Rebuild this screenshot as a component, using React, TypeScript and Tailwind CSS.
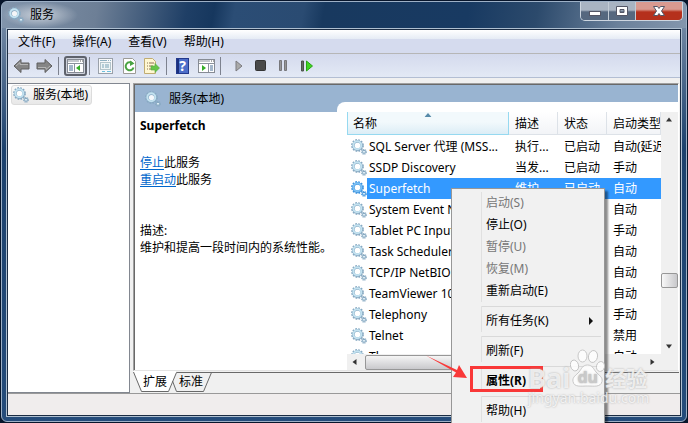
import React from "react";

function Gear({ active = false, size = 16 }: { active?: boolean; size?: number }) {
  const edge = active ? "#3d93de" : "#87a9c2";
  const ring = active ? "#7cc0f4" : "#c3e2f0";
  return (
    <svg width={size} height={size} viewBox="0 0 16 16" className="shrink-0" aria-hidden="true">
      <circle cx="6.5" cy="6.5" r="5.6" fill="none" stroke={edge} strokeWidth="1.600" strokeDasharray="1.76 1.17" />
      <circle cx="6.5" cy="6.5" r="4.1" fill="none" stroke={edge} strokeWidth="2.6" />
      <circle cx="6.3" cy="6.3" r="4" fill="none" stroke={ring} strokeWidth="1.9" />
      <circle cx="6.5" cy="6.5" r="2.6" fill="#fff" fillOpacity="0.9" />
      <circle cx="13" cy="12.8" r="2.3" fill="none" stroke={edge} strokeWidth="1.2" strokeDasharray="1.1 0.7" />
      <circle cx="13" cy="12.8" r="1.5" fill="#e4f3fa" stroke={edge} strokeWidth="1" />
    </svg>
  );
}

function CaptionButtons() {
  return (
    <div className="flex h-[19px] overflow-hidden rounded-b-[5px] border border-t-0 border-[#cdd6e0]">
      <button aria-label="最小化" className="flex w-7 items-center justify-center border-r border-[#c3ccd6] bg-linear-to-b from-[#a9b4c2] from-45% to-[#56687f] to-55%">
        <svg width="12" height="16" viewBox="0 0 12 16">
          <rect x="0.5" y="8.5" width="11" height="4" fill="#fff" stroke="#535666" />
        </svg>
      </button>
      <button aria-label="最大化" className="flex w-[27px] items-center justify-center border-r border-[#c3ccd6] bg-linear-to-b from-[#a9b4c2] from-45% to-[#56687f] to-55%">
        <svg width="12" height="16" viewBox="0 0 12 16">
          <path d="M.5 3.500h11v9H.5zM4 6.500h4v3H4z" fill="#fff" stroke="#535666" fillRule="evenodd" />
        </svg>
      </button>
      <button aria-label="关闭" className="flex w-[46px] items-center justify-center bg-linear-to-b from-[#d99a90] from-40% to-[#b5301c] to-55%">
        <svg width="12" height="16" viewBox="0 0 12 16">
          <path d="M.5 3.500h4L6 5.500l1.500-2h4L8.500 8l3 4.500h-4L6 10.500l-1.500 2h-4l3-4.500z" fill="#fff" stroke="#535666" />
        </svg>
      </button>
    </div>
  );
}

function ArrowIcon({ flip = false }: { flip?: boolean }) {
  return (
    <svg width="17" height="16" viewBox="0 0 17 16" className={flip ? "rotate-180" : ""}>
      <path d="M1 8l7-6.500V5h8v6H8v3.500z" fill="#858585" stroke="#5e5e5e" />
      <path d="M3 8l4-3.500V6.500h8" fill="none" stroke="#b5b5b5" />
    </svg>
  );
}

function PaneIcon({ right = false }: { right?: boolean }) {
  return (
    <svg width="17" height="14" viewBox="0 0 17 14">
      <rect x=".5" y=".5" width="16" height="13" fill="#fff" stroke="#868b94" />
      <path d="M1 2h11M1 4.500h15" stroke="#8b929d" />
      <path d="M13 2h1M15 2h1" stroke="#555" />
      {right ? (
        <>
          <path d="M10.500 5v8" stroke="#8b929d" />
          <path d="M12 7h3M12 9h3M12 11h3" stroke="#4b7198" />
          <path d="M4 6v6l4-3z" fill="#35ad28" />
        </>
      ) : (
        <>
          <path d="M7.500 5v8" stroke="#8b929d" />
          <path d="M2 7h4M2 9h4M2 11h4" stroke="#4b7198" />
          <path d="M13 6v6L9 9z" fill="#35ad28" />
        </>
      )}
    </svg>
  );
}

function ToolSeparator() {
  return <span className="h-[18px] w-px bg-[#7d828f]" />;
}

function Toolbar() {
  return (
    <div role="toolbar" className="flex h-6 items-center border-b border-[#b3bed3] bg-linear-to-b from-[#d4daed] to-[#e3e9f5] pl-[5px]">
      <button aria-label="后退" className="mr-1.5"><ArrowIcon /></button>
      <button aria-label="前进" className="mr-[5px]"><ArrowIcon flip /></button>
      <ToolSeparator />
      <button aria-label="显示/隐藏控制台树" className="mr-0.5 ml-[5px] flex h-5 w-[23px] items-center justify-center rounded-[3px] border-2 border-[#5e626c] bg-[#cdd1dc]"><PaneIcon /></button>
      <ToolSeparator />
      <button aria-label="属性" className="mr-2.5 ml-2">
        <svg width="15" height="16" viewBox="0 0 15 16">
          <rect x=".5" y=".5" width="14" height="15" fill="#f7f8fa" stroke="#9aa1aa" />
          <path d="M2 2.500h11" stroke="#8fb0c2" strokeDasharray="7 1 1 1" />
          <rect x="2.500" y="4.500" width="10" height="7" fill="#eef4f6" stroke="#b3c4cb" />
          <path d="M4 7h2M7 7h4M4 9h2M7 9h4" stroke="#7ba3b6" />
          <path d="M4 13.500h3M9 13.500h4" stroke="#6cc0de" />
        </svg>
      </button>
      <button aria-label="刷新" className="mr-2">
        <svg width="13" height="16" viewBox="0 0 13 16">
          <path d="M.5.500h9l3 3v12H.5z" fill="#fff" stroke="#9c9b96" />
          <path d="M9.500 5.500a4 4 0 1 0 1 4" fill="none" stroke="#49a342" strokeWidth="2" />
          <path d="M7 2.500l4.500 3L7 8z" fill="#49a342" />
        </svg>
      </button>
      <button aria-label="导出列表" className="mr-1.5">
        <svg width="16" height="16" viewBox="0 0 16 16">
          <path d="M.5.500h8l3 3v12H.5z" fill="#fff7d2" stroke="#c0ac72" />
          <path d="M3 5h1M5 5h5M3 8h1M5 8h4M3 11h1M5 11h4" stroke="#8b7354" />
          <path d="M7 8h4V5.500L15.500 10 11 14.500V12H7z" fill="#65c54a" stroke="#59a93f" strokeWidth=".6" />
        </svg>
      </button>
      <ToolSeparator />
      <button aria-label="帮助" className="ml-[9px] flex h-4 w-[13px] items-center justify-center border border-[#23398c] bg-linear-to-r from-[#1b317e] from-15% to-[#4d6ec9] to-20% text-[14px] leading-4 font-bold text-white">?</button>
      <button aria-label="显示/隐藏操作窗格" className="mr-[5px] ml-[9px]"><PaneIcon right /></button>
      <ToolSeparator />
      <button aria-label="启动服务" className="ml-3.5">
        <svg width="8" height="12" viewBox="0 0 8 12"><path d="M1 1v10l6-5z" fill="#aaa" stroke="#7b7b7f" /></svg>
      </button>
      <button aria-label="停止服务" className="ml-3">
        <svg width="11" height="11" viewBox="0 0 11 11"><rect x=".5" y=".5" width="10" height="10" rx="1" fill="#494949" stroke="#343434" /></svg>
      </button>
      <button aria-label="暂停服务" className="ml-[13px]">
        <svg width="8" height="11" viewBox="0 0 8 11"><path d="M.5.500h2v10h-2zM5.500.500h2v10h-2z" fill="#969696" stroke="#77777b" /></svg>
      </button>
      <button aria-label="重新启动服务" className="ml-3.5">
        <svg width="12" height="12" viewBox="0 0 12 12"><path d="M.5 1h2v10h-2z" fill="#656a65" stroke="#4c524c" /><path d="M5.500 1v10l6-5z" fill="#40d522" stroke="#29a516" /></svg>
      </button>
    </div>
  );
}

const services: [string, string, string, string][] = [
  ["SQL Server 代理 (MSS...", "执行...", "已启动", "自动(延迟启动)"],
  ["SSDP Discovery", "当发...", "已启动", "手动"],
  ["Superfetch", "维护...", "已启动", "自动"],
  ["System Event Notification", "监视...", "已启动", "自动"],
  ["Tablet PC Input Service", "启用...", "", "手动"],
  ["Task Scheduler", "使用...", "已启动", "自动"],
  ["TCP/IP NetBIOS Helper", "提供...", "已启动", "自动"],
  ["TeamViewer 10", "Tea...", "已启动", "自动"],
  ["Telephony", "提供...", "", "手动"],
  ["Telnet", "允许...", "", "禁用"],
  ["Themes", "为用...", "已启动", "自动"],
];

function ServiceTable() {
  return (
    <table className="w-full table-fixed border-collapse text-left">
      <colgroup>
        <col />
        <col className="w-[49px]" />
        <col className="w-[49px]" />
        <col className="w-[54px]" />
      </colgroup>
      <thead>
        <tr>
          <th className="h-6 p-0 pb-px font-normal">
            <div className="relative h-[23px] border border-t-0 border-[#96d9f0] bg-linear-to-b from-[#f2f9fc] from-45% to-[#dcedf6] pl-[5px] leading-6">
              名称
              <svg width="7" height="4" viewBox="0 0 7 4" className="absolute top-px left-1/2 -translate-x-1/2"><path d="M0 4l3.500-4L7 4z" fill="#578aa9" /></svg>
            </div>
          </th>
          {["描述", "状态", "启动类型"].map((name) => (
            <th key={name} className="h-6 p-0 pb-px font-normal">
              <div className="h-[23px] overflow-hidden border-r border-b border-[#dde2e8] bg-linear-to-b from-white to-[#f2f4f7] pl-1.5 leading-6 whitespace-nowrap">{name}</div>
            </th>
          ))}
        </tr>
      </thead>
      <tbody>
        {services.map(([name, about, state, type], i) => {
          const on = i === 2;
          const cell = on ? "h-[21px] bg-[#3399ff] p-0 text-white" : "h-[21px] p-0";
          return (
            <tr key={name}>
              <td className="h-[21px] p-0">
                <div className="flex h-[21px] items-center pl-1">
                  <Gear active={on} />
                  <span className={on ? "flex-1 truncate bg-[#3399ff] pl-0.5 leading-[21px] text-white" : "flex-1 overflow-hidden pl-0.5 leading-[21px] whitespace-nowrap"}>{name}</span>
                </div>
              </td>
              {[about, state, type].map((value, c) => (
                <td key={c} className={cell}>
                  <div className="h-[21px] overflow-hidden pl-1.5 leading-[21px] whitespace-nowrap">{value}</div>
                </td>
              ))}
            </tr>
          );
        })}
      </tbody>
    </table>
  );
}

function ScrollArrow({ turn }: { turn: string }) {
  return (
    <svg width="16" height="16" viewBox="0 0 16 16" className={turn}>
      <path d="M5 9.500l3-4 3 4z" fill="#333" />
    </svg>
  );
}

const menuGroups: { label: string; off?: boolean; bold?: boolean; more?: boolean }[][] = [
  [{ label: "启动(S)", off: true }, { label: "停止(O)" }, { label: "暂停(U)", off: true }, { label: "恢复(M)", off: true }, { label: "重新启动(E)" }],
  [{ label: "所有任务(K)", more: true }],
  [{ label: "刷新(F)" }],
  [{ label: "属性(R)", bold: true }],
  [{ label: "帮助(H)" }],
];

function ContextMenu() {
  return (
    <div role="menu" className="absolute top-[188px] left-[451px] w-[154px] border border-[#979797] bg-[#f1f1f1] p-[3px] pb-3 shadow-[3px_3px_2px_rgba(0,0,0,0.45)]">
      {menuGroups.map((group, g) => (
        <div key={g} className="ml-[26px] border-l border-[#e0e0e0]">
          {g > 0 && <div className="mt-1 mb-[3px] h-px bg-[#d9d9d9]" />}
          {group.map((item) => (
            <button
              key={item.label}
              role="menuitem"
              disabled={item.off}
              className={
                item.bold
                  ? "flex h-[22px] w-full items-center pl-1 font-bold"
                  : item.off
                    ? "flex h-[22px] w-full items-center pl-1 text-[#777]"
                    : "flex h-[22px] w-full items-center justify-between pr-2 pl-1"
              }
            >
              {item.label}
              {item.more && <svg width="4" height="8" viewBox="0 0 4 8"><path d="M0 0l4 4-4 4z" fill="#111" /></svg>}
            </button>
          ))}
        </div>
      ))}
    </div>
  );
}

function Watermark() {
  return (
    <div className="pointer-events-none absolute top-[348px] left-[528px] w-[124px] text-white/75 [text-shadow:0_0_2px_#aaa]">
      <div className="flex h-[46px] items-end">
        <span className="text-[27px] leading-8 font-bold">Bai</span>
        <div className="relative mb-[7px] h-[38px] w-[35px] shrink-0">
          <svg width="35" height="38" viewBox="0 0 35 38" fill="#fff" fillOpacity=".8" stroke="#bbb" strokeWidth=".8" aria-hidden="true">
            <ellipse cx="12.500" cy="7" rx="4.500" ry="6" />
            <ellipse cx="23" cy="7.500" rx="4.500" ry="6" transform="rotate(12 23 7.500)" />
            <ellipse cx="4.500" cy="16.500" rx="4" ry="5.500" transform="rotate(-15 4.500 16.500)" />
            <ellipse cx="30.500" cy="17.500" rx="4" ry="5" transform="rotate(15 30.500 17.500)" />
            <path d="M17.500 16c5 0 6 4 8.500 7s7 5 6 9.500c-1.500 6-8 4.500-14.500 4.500S4 38.500 3 32.500C2 28 6.500 26 9 23s3.500-7 8.500-7z" />
          </svg>
          <span className="absolute inset-x-0 bottom-0 text-center text-[16px] leading-5 font-bold text-[#c9c9c9]">du</span>
        </div>
        <span className="text-[21px] leading-8 font-bold whitespace-nowrap">经验</span>
      </div>
      <div className="-mt-1 text-[14px] leading-4 whitespace-nowrap">jingyan.baidu.com</div>
    </div>
  );
}

export default function App() {
  return (
    <div className="relative h-screen w-full overflow-hidden bg-[#07152b] p-px font-['Noto_Sans','Noto_Sans_CJK_SC',sans-serif] text-[12px] text-black">
      <div className="flex h-full flex-col rounded-[6px] border border-[#9db0c6] bg-linear-to-b from-[#8295ad] via-[#1c416d] via-35% to-[#254c7b] px-1 pb-1">
        <header className="-mx-1 flex h-[26px] shrink-0 items-start justify-between rounded-t-[5px] bg-[linear-gradient(100deg,#8295ac_0%,#6d7f96_14%,#1f3f66_27%,#16375e_31%,#2b4d75_34%,#2a4b72_44%,#18395f_47%,#183a62_68%,#2c4a6c_78%,#6b819b_90%,#8396ad_100%)]">
          <div className="flex h-[26px] items-center gap-1.5 bg-[radial-gradient(closest-side,rgba(255,255,255,0.6),transparent)] pr-6 pl-1.5">
            <Gear />
            <h1>服务</h1>
          </div>
          <div className="pr-[3px]"><CaptionButtons /></div>
        </header>

        <div className="flex min-h-0 flex-1 flex-col border border-[#aebfd0]">
          <div className="flex min-h-0 flex-1 flex-col border border-[#1b2c43] bg-[#f0f0f0]">
            <nav className="flex h-6 shrink-0 items-center gap-[17px] border-b border-[#b6b6b6] bg-[linear-gradient(#fff_0%,#e6ecf5_38%,#d5dbee_39%)] pl-2.5">
              <button>文件(F)</button>
              <button>操作(A)</button>
              <button>查看(V)</button>
              <button>帮助(H)</button>
            </nav>
            <Toolbar />

            <main className="mt-[5px] flex min-h-0 flex-1">
              <aside className="w-[122px] shrink-0 border border-l-0 border-[#828790] bg-white pt-px pl-[3px]">
                <button className="flex h-5 items-center gap-1 rounded-[3px] border border-[#dcdcdc] bg-linear-to-b from-[#fafafa] to-[#e8e8e8] pr-[3px] pl-px">
                  <Gear />
                  服务(本地)
                </button>
              </aside>

              <div className="mr-px ml-[3px] flex min-w-0 flex-1 flex-col">
                <section className="flex min-h-0 flex-1 flex-col border border-t-[#a0a0a0] border-r-white border-b-[#e3e3e3] border-l-[#a0a0a0]">
                  <div className="flex min-h-0 flex-1 flex-col border-t border-l border-[#696969] bg-white">
                    <div className="flex h-[27px] shrink-0 bg-[#99b4d1]">
                      <h2 className="flex w-[202px] items-center gap-2 pl-2.5"><Gear />服务(本地)</h2>
                      <div className="mt-[17px] flex-1 rounded-tl-[8px] bg-white" />
                    </div>
                    <div className="flex min-h-0 flex-1">
                      <article className="w-[212px] shrink-0 pt-[5px] pl-[5px] leading-[17px]">
                        <h3 className="font-bold">Superfetch</h3>
                        <p className="mt-5"><a href="#stop" className="text-[#0066cc] underline underline-offset-2">停止</a>此服务</p>
                        <p><a href="#restart" className="text-[#0066cc] underline underline-offset-2">重启动</a>此服务</p>
                        <p className="mt-[34px]">描述:</p>
                        <p>维护和提高一段时间内的系统性能。</p>
                      </article>
                      <div className="flex min-w-0 flex-1 flex-col">
                        <div className="flex min-h-0 flex-1">
                          <div className="min-w-0 flex-1 overflow-hidden"><ServiceTable /></div>
                          <div className="flex w-[17px] shrink-0 flex-col bg-[#f0f0f0]">
                            <ScrollArrow turn="" />
                            <div className="flex-1" />
                            <div className="mb-[50px] h-[15px] rounded-[2px] border border-[#979797] bg-linear-to-r from-[#f8f8f8] to-[#c8c8cb]" />
                            <ScrollArrow turn="rotate-180" />
                          </div>
                        </div>
                        <div className="flex h-4 shrink-0 items-center bg-[#f0f0f0]">
                          <ScrollArrow turn="-rotate-90" />
                          <div className="ml-0.5 h-[15px] w-52 rounded-[2px] border border-[#979797] bg-linear-to-b from-[#f5f5f5] to-[#c9c9cc]" />
                          <div className="flex-1" />
                          <span className="mr-[18px]"><ScrollArrow turn="rotate-90" /></span>
                        </div>
                      </div>
                    </div>
                  </div>
                </section>
                <div role="tablist" className="relative flex h-[22px] shrink-0 items-center">
                  <svg width="100%" height="22" className="absolute inset-0" aria-hidden="true">
                    <path d="M0 0l9 20.500h27L43 1V0z" fill="#fff" />
                    <path d="M.5 1l8 19.500h27l8-19H1200M39.500 10l4 10.500h27l8-19" fill="none" stroke="#696969" />
                  </svg>
                  <button role="tab" aria-selected="true" className="relative ml-2.5 w-6">扩展</button>
                  <button role="tab" aria-selected="false" className="relative ml-3 w-6">标准</button>
                </div>
              </div>
            </main>
            <footer className="h-[22px] shrink-0 border-t border-[#999] bg-[#f0eded]" />
          </div>
        </div>
      </div>

      <ContextMenu />
      <div className="pointer-events-none absolute top-[366px] left-[470px] h-[26px] w-[73px] border-3 border-[#f93838]" />
      <svg width="42" height="26" viewBox="0 0 42 26" className="pointer-events-none absolute top-[355px] left-[426px]" aria-hidden="true">
        <path d="M0 .5l31 14.500 2-5 8 13-14-1 3-4.500z" fill="#f93838" />
      </svg>
      <Watermark />
    </div>
  );
}
